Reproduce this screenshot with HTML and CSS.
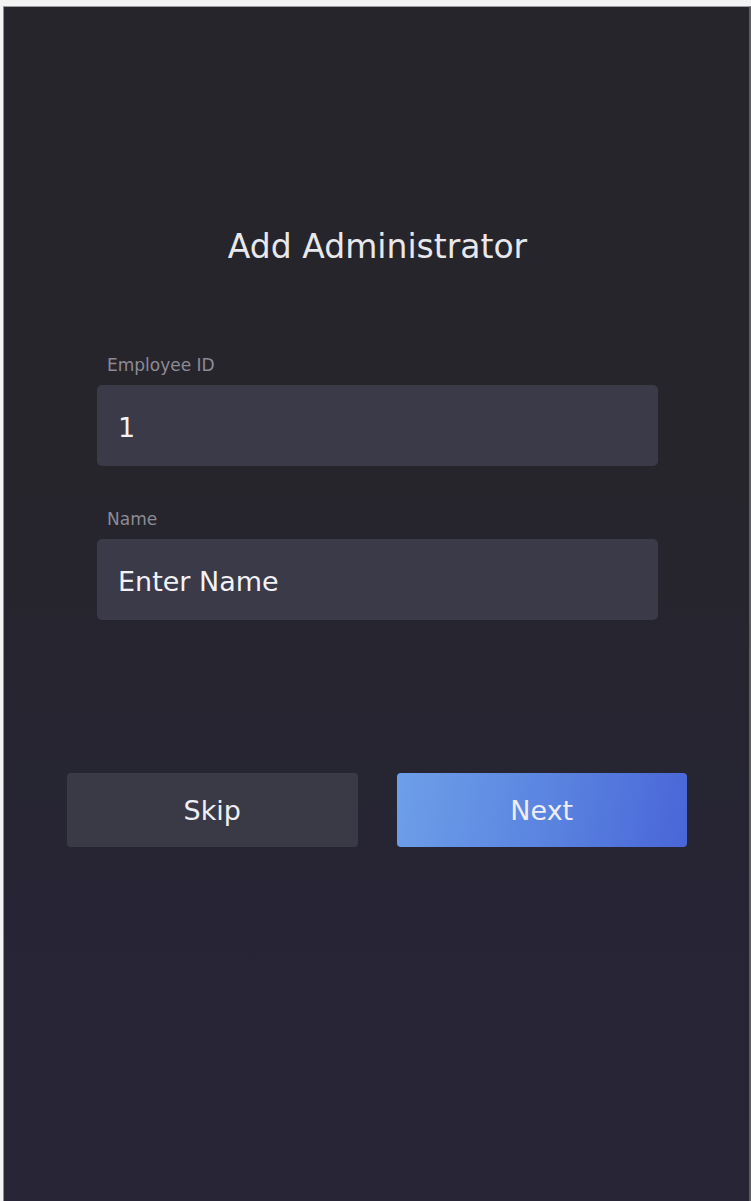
FILE: index.html
```html
<!DOCTYPE html>
<html lang="en">
<head>
<meta charset="utf-8">
<title>Add Administrator</title>
<link rel="stylesheet" href="styles.css">
</head>
<body>
<main class="screen">
  <h1 class="title">Add Administrator</h1>
  <form class="form">
    <div class="field">
      <label class="field-label">Employee ID</label>
      <div class="field-input">1</div>
    </div>
    <div class="field">
      <label class="field-label">Name</label>
      <div class="field-input">Enter Name</div>
    </div>
  </form>
  <div class="actions">
    <button class="btn btn-skip" type="button">Skip</button>
    <button class="btn btn-next" type="button">Next</button>
  </div>
</main>
</body>
</html>
```

FILE: styles.css
```css
* {
  box-sizing: border-box;
}

html, body {
  margin: 0;
  padding: 0;
}

body {
  background: #f3f3f3;
  font-family: "DejaVu Sans", "Noto Sans", sans-serif;
  overflow: hidden;
}

.screen {
  margin: 6px 0 0 3px;
  height: 1195px;
  border-top: 1px solid #9c9c9e;
  border-left: 1px solid #8e8e90;
  border-right: 2px solid #5c5c60;
  background: linear-gradient(180deg, #26252b 0%, #26252c 40%, #272535 75%, #282636 100%);
  padding-top: 220px;
}

.title {
  margin: 0;
  font-weight: normal;
  font-size: 33px;
  line-height: 40px;
  color: #e8e8ec;
  text-align: center;
  padding-left: 2px;
}

.form {
  margin: 88px 91px 0 93px;
  display: flex;
  flex-direction: column;
  gap: 43px;
}

.field {
  display: flex;
  flex-direction: column;
  gap: 10px;
}

.field-label {
  font-size: 17px;
  line-height: 20px;
  color: #8c8b96;
  padding-left: 10px;
}

.field-input {
  height: 81px;
  border-radius: 5px;
  background: #3b3a48;
  color: #f2f2f6;
  font-size: 27px;
  display: flex;
  align-items: center;
  padding: 3px 0 0 21px;
}

.actions {
  margin: 153px 62px 0 63px;
  display: flex;
  gap: 39px;
}

.btn {
  flex: 1;
  height: 74px;
  border: none;
  border-radius: 4px;
  font-family: inherit;
  font-size: 27px;
  color: #eeeef4;
  padding: 0;
}

.btn-skip {
  background: #3a3946;
}

.btn-next {
  background: linear-gradient(100deg, #6e9fe9 0%, #5b85e0 50%, #4966d8 100%);
}
```
